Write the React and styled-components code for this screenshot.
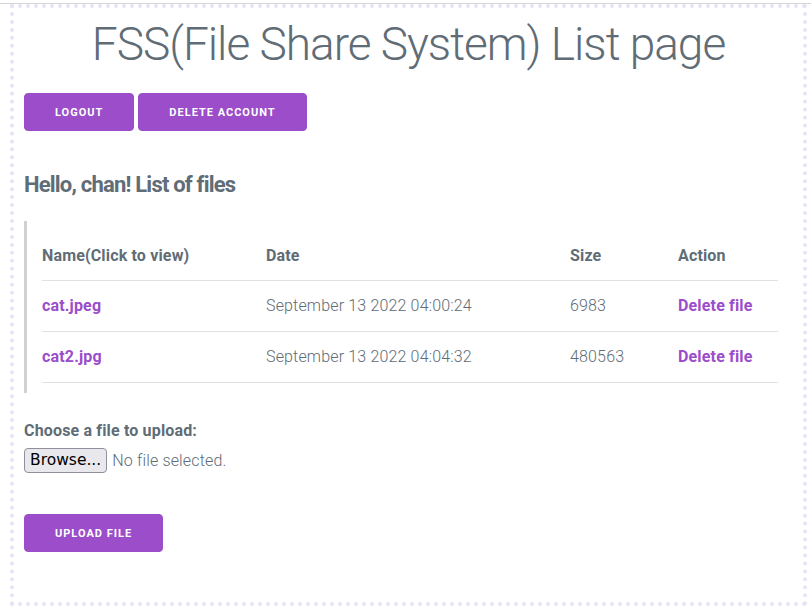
import React from "react";
import styled, { createGlobalStyle } from "styled-components";

const GlobalStyle = createGlobalStyle`
  html {
    font-size: 62.5%;
  }
  body {
    margin: 3px 0 0;
    border-top: 1px solid #d4d4d4;
    background: #fff;
    color: #606c76;
    font-family: Roboto, "Helvetica Neue", Helvetica, Arial, sans-serif;
    font-size: 1.6rem;
    font-weight: 300;
    letter-spacing: 0.01em;
    line-height: 1.6;
  }
`;

const Page = styled.div`
  margin: 0 4px 0 10px;
  height: 602px;
  box-sizing: border-box;
  border: 4px dotted #e4e4f7;
  padding: 9px 10px 10px;
`;

const Title = styled.h1`
  margin: 0 0 21px;
  text-align: center;
  font-size: 4.6rem;
  font-weight: 300;
  letter-spacing: -0.1rem;
  line-height: 1.2;
`;

const ButtonRow = styled.div`
  display: flex;
  gap: 4px;
`;

const Button = styled.button`
  background: #9b4dca;
  border: 0.1rem solid #9b4dca;
  border-radius: 0.4rem;
  color: #fff;
  cursor: pointer;
  font-family: Roboto, sans-serif;
  font-size: 1.1rem;
  font-weight: 700;
  height: 3.8rem;
  letter-spacing: 0.1rem;
  line-height: 3.8rem;
  padding: 0 3rem;
  text-transform: uppercase;
  white-space: nowrap;
`;

const Heading = styled.h4`
  margin: 39px 0 21px;
  font-size: 2.2rem;
  font-weight: 700;
  letter-spacing: -0.08rem;
  line-height: 1.35;
`;

const Quote = styled.blockquote`
  margin: 0 0 25px;
  border-left: 0.3rem solid #d1d1d1;
  padding: 1rem 1.5rem;
`;

const Table = styled.table`
  width: 100%;
  border-spacing: 0;
  table-layout: fixed;
`;

const Cell = styled.td`
  text-align: left;
  border-bottom: 0.1rem solid #e1e1e1;
  padding: 1.2rem 1.5rem;
  font-weight: ${(p) => (p.head ? 700 : 300)};

  &:first-child {
    padding-left: 0;
  }
  &:last-child {
    padding-right: 0;
  }
`;

const FileLink = styled.a`
  color: #9b4dca;
  font-weight: 700;
  text-decoration: none;
  cursor: pointer;
`;

const Label = styled.label`
  display: block;
  font-weight: 700;
  margin-bottom: 0.5rem;
`;

const Picker = styled.div`
  display: flex;
  align-items: center;
  gap: 5px;
  height: 25px;
  margin-bottom: 41px;
`;

const Browse = styled.span`
  display: inline-flex;
  align-items: center;
  height: 25px;
  box-sizing: border-box;
  padding: 0 5px;
  background: #e9e9ed;
  border: 1px solid #8f8f9d;
  border-radius: 4px;
  color: #000;
  font-family: "DejaVu Sans", sans-serif;
  font-size: 1.55rem;
  font-weight: 400;
  letter-spacing: 0;
`;

const HiddenInput = styled.input`
  display: none;
`;

const files = [
  { name: "cat.jpeg", date: "September 13 2022 04:00:24", size: 6983 },
  { name: "cat2.jpg", date: "September 13 2022 04:04:32", size: 480563 },
];

export default function App() {
  return (
    <>
      <GlobalStyle />
      <Page>
        <Title>FSS(File Share System) List page</Title>
        <ButtonRow>
          <Button>Logout</Button>
          <Button>Delete account</Button>
        </ButtonRow>
        <Heading>Hello, chan! List of files</Heading>
        <Quote>
          <Table>
            <colgroup>
              <col style={{ width: 209 }} />
              <col style={{ width: 304 }} />
              <col style={{ width: 108 }} />
              <col style={{ width: 115 }} />
            </colgroup>
            <thead>
              <tr>
                <Cell as="th" head>
                  Name(Click to view)
                </Cell>
                <Cell as="th" head>
                  Date
                </Cell>
                <Cell as="th" head>
                  Size
                </Cell>
                <Cell as="th" head>
                  Action
                </Cell>
              </tr>
            </thead>
            <tbody>
              {files.map((f) => (
                <tr key={f.name}>
                  <Cell>
                    <FileLink>{f.name}</FileLink>
                  </Cell>
                  <Cell>{f.date}</Cell>
                  <Cell>{f.size}</Cell>
                  <Cell>
                    <FileLink>Delete file</FileLink>
                  </Cell>
                </tr>
              ))}
            </tbody>
          </Table>
        </Quote>
        <form>
          <Label htmlFor="upload">Choose a file to upload:</Label>
          <Picker as="label" htmlFor="upload">
            <Browse>Browse...</Browse>
            <span>No file selected.</span>
            <HiddenInput id="upload" type="file" />
          </Picker>
          <Button type="button">Upload file</Button>
        </form>
      </Page>
    </>
  );
}
